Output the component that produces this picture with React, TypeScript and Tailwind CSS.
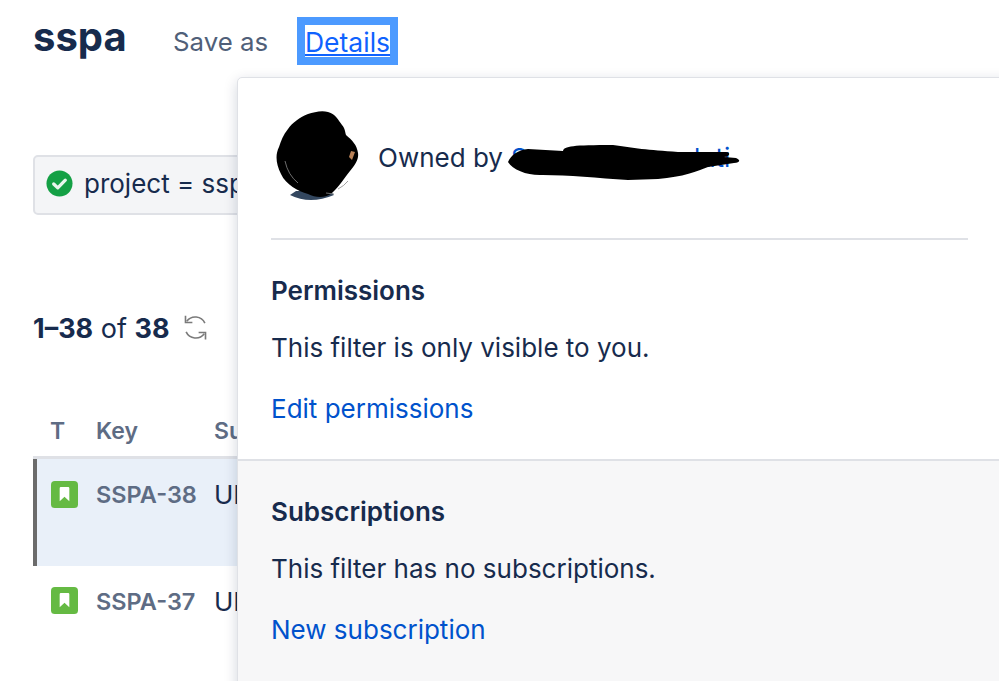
import React from "react";

const Story = () => (
  <svg width="27" height="27" viewBox="0 0 28 28" className="shrink-0">
    <rect width="28" height="28" rx="4" fill="#65ba43" />
    <path d="M9 7.5a1.2 1.2 0 0 1 1.2-1.2h7.6A1.2 1.2 0 0 1 19 7.5V21l-5-4.6L9 21z" fill="#fff" />
  </svg>
);

const Row = ({ k, active }: { k: string; active?: boolean }) => (
  <div className={active ? "flex h-[107px] border-l-4 border-[#6b6b6b] bg-[#e9f0f9] pt-[20px]" : "flex h-[107px] border-l-4 border-transparent pt-[20px]"}>
    <div className={active ? "mt-[2px] ml-[14px] w-[45px] shrink-0" : "mt-[1px] ml-[14px] w-[45px] shrink-0"}><Story /></div>
    <div className="w-[118px] shrink-0 text-[23.5px] leading-[32px] font-semibold text-[#5e6c84]">{k}</div>
    <div className="text-[26px] leading-[32px] text-[#172b4d]">UI</div>
  </div>
);

export default function App() {
  return (
    <div className="relative h-[681px] w-[999px] overflow-hidden bg-white font-['Inter','Liberation_Sans',sans-serif] text-[#172b4d]">
      <div className="pl-[33px]">
        <div className="flex h-[78px] items-start">
          <div className="mt-[13px] w-[140px] text-[40px] leading-[48px] font-bold">sspa</div>
          <div className="mt-[25px] w-[124px] text-[25.8px] leading-[34px] text-[#505f79]">Save as</div>
          <div className="mt-[17px] h-[48px] w-[101px] border-8 border-[#4c9aff] pt-[1px] text-center text-[26.5px] leading-[32px] text-[#0f62fe] underline">Details</div>
        </div>
        <div className="w-[204px] overflow-hidden">
          <div className="mt-[77px] flex h-[60px] w-[400px] items-center gap-[11px] rounded-[5px] border-2 border-[#dfe1e6] bg-[#f4f5f7] pb-[3px] pl-[11px] text-[26px] whitespace-nowrap">
            <svg width="27" height="27" viewBox="0 0 28 28" className="shrink-0">
              <circle cx="14" cy="14" r="13.5" fill="#14a045" />
              <path d="M8 14.5l4.2 4L20 10.5" fill="none" stroke="#e8f6ec" strokeWidth="3.4" strokeLinecap="round" strokeLinejoin="round" />
            </svg>
            <span>project = sspa</span>
          </div>
          <div className="mt-[96px] flex h-[36px] items-center text-[27px] whitespace-nowrap">
            <span><b className="font-bold">1–38</b> of <b className="font-bold">38</b></span>
            <svg width="23" height="25" viewBox="3 2 18 20" fill="none" stroke="#7a7a7a" strokeWidth="1.3" className="mb-[4px] ml-[14px]">
              <path d="M19.5 8.5A8.5 8.5 0 0 0 5 7" />
              <path d="M4 2.5V8h5.5" />
              <path d="M4.5 15.5A8.5 8.5 0 0 0 19 17" />
              <path d="M20 21.5V16h-5.5" />
            </svg>
          </div>
          <div className="mt-[67px] flex h-[42px] items-start text-[23px] leading-[34px] font-semibold text-[#5e6c84]">
            <div className="ml-[17px] w-[46px] shrink-0">T</div>
            <div className="w-[118px] shrink-0">Key</div>
            <div className="w-[24px] overflow-hidden whitespace-nowrap">Summary</div>
          </div>
          <div className="h-[3px] bg-[#dfe1e6]" />
          <Row k="SSPA-38" active />
          <Row k="SSPA-37" />
        </div>
      </div>

      <div className="absolute top-[77px] left-[237px] h-[640px] w-[800px] rounded-[5px] border border-[#dfe1e6] bg-white shadow-[0_4px_14px_rgba(9,30,66,0.18)]">
        <div className="ml-[33px] flex h-[162px] w-[697px] items-center border-b-2 border-[#dfe1e6] pb-[2px]">
          <svg width="84" height="92" viewBox="0 0 84 92" className="mt-[-1px] ml-[5px] shrink-0">
            <path d="M14 84q20 10 44 0l-4-4H20z" fill="#33475f" />
            <path d="M32 3c6-2 14-4 20-2 8 2 10 8 14 13 3 3 3 7 4 10 6 5 11 10 12 18 1 6-3 12-8 18-6 7-10 15-18 22-6 5-16 5-24 1C22 80 10 74 5 63 0 53-1 44 3 36c2-6 4-12 9-18 4-6 12-12 20-15z" fill="#000" />
            <path d="M75 40l4 1-3 8-3-3z" fill="#b98258" />
            <path d="M9 50q3 14 13 22M62 78q6-3 10-8M50 82l8 1" fill="none" stroke="#8a8a8a" strokeWidth="0.8" />
          </svg>
          <div className="ml-[18px] flex items-center text-[26px] whitespace-nowrap">
            <span>Owned by</span>
            <span className="ml-[8px] w-[183px] text-[#0052cc]">S</span>
            <span className="text-[#0052cc]">luti</span>
          </div>
        </div>
        <svg width="232" height="36" viewBox="0 0 232 36" className="absolute top-[67px] left-[270px]">
          <path d="M0 17C3 10 10 5 20 4L55 6C56 1 65 0 105 0C125 3 140 5 170 7L218 7C223 7 222 12 216 12L228 13C233 15 232 18 226 18L200 22C190 26 175 32 150 34L120 35C90 33 60 30 35 30C20 31 5 25 0 17Z" fill="#000" />
        </svg>
        <div className="h-[221px] border-b-2 border-[#dfe1e6] px-[33px] pt-[33px]">
          <div className="text-[26px] leading-[36px] font-semibold">Permissions</div>
          <div className="mt-[21px] text-[26px] leading-[36px]">This filter is only visible to you.</div>
          <div className="mt-[25px] text-[26px] leading-[36px] text-[#0052cc]">Edit permissions</div>
        </div>
        <div className="h-[300px] bg-[#f7f7f8] px-[33px] pt-[33px]">
          <div className="text-[26px] leading-[36px] font-semibold">Subscriptions</div>
          <div className="mt-[21px] text-[26px] leading-[36px]">This filter has no subscriptions.</div>
          <div className="mt-[25px] text-[26px] leading-[36px] text-[#0052cc]">New subscription</div>
        </div>
      </div>
    </div>
  );
}
